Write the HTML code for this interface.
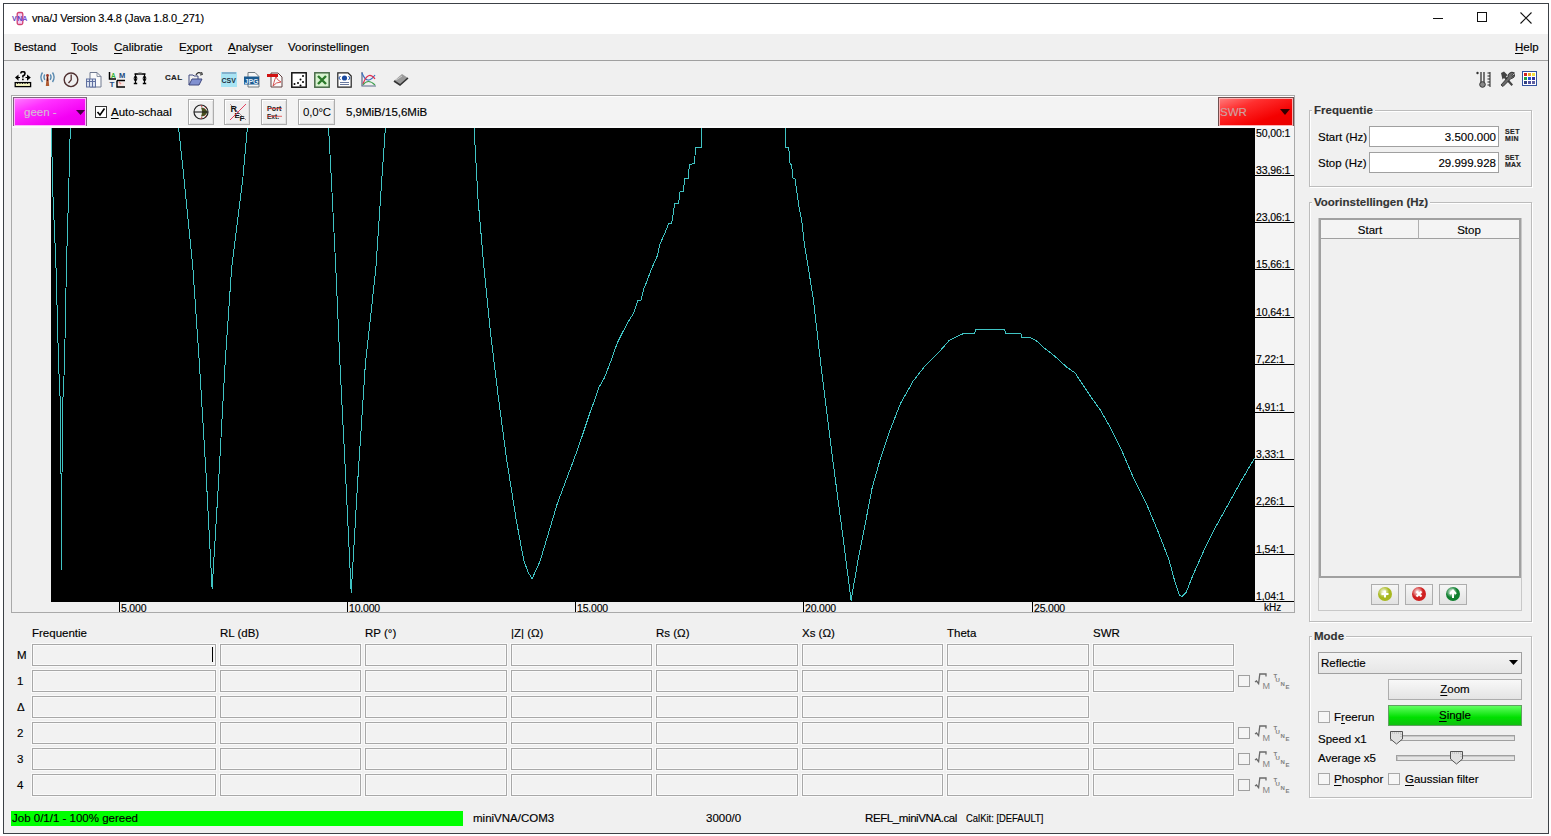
<!DOCTYPE html><html><head><meta charset="utf-8"><style>

*{box-sizing:border-box;margin:0;padding:0}
html,body{width:1551px;height:836px;overflow:hidden;background:#fff;font-family:"Liberation Sans", sans-serif;color:#000}
.ab{position:absolute}
.t{position:absolute;white-space:nowrap;font-size:11.5px;line-height:14px;color:#000;-webkit-text-stroke:0.15px currentColor}
.fld{position:absolute;border:1px solid #a8a8a8;background:#f2f2f2;box-shadow:inset 0 0 0 1px #fafafa,0 0 0 1px #fafafa}
.u{text-decoration:underline;text-decoration-thickness:1px;text-underline-offset:2px}

</style></head><body>
<div class="ab" style="left:3px;top:3px;width:1546px;height:831px;border:1px solid #3c4146;background:#f0f0f0"></div>
<div class="ab" style="left:4px;top:4px;width:1544px;height:30px;background:#fff"></div>
<div class="t" style="left:32px;top:11px;font-size:11px;letter-spacing:-0.2px;color:#000">vna/J Version 3.4.8 (Java 1.8.0_271)</div>
<div class="ab" style="left:1433px;top:18px;width:10px;height:1px;background:#111"></div>
<div class="ab" style="left:1477px;top:12px;width:10px;height:10px;border:1px solid #111"></div>
<svg class="ab" style="left:1520px;top:12px" width="12" height="12"><path d="M0.5 0.5L11.5 11.5M11.5 0.5L0.5 11.5" stroke="#111" stroke-width="1.1"/></svg>
<div class="ab" style="left:4px;top:34px;width:1544px;height:26px;background:#f0f0f0"></div>
<div class="ab" style="left:4px;top:60px;width:1544px;height:1px;background:#a0a0a0"></div>
<div class="t" style="left:14px;top:40px">Bestand</div>
<div class="t" style="left:71px;top:40px"><span class="u">T</span>ools</div>
<div class="t" style="left:114px;top:40px"><span class="u">C</span>alibratie</div>
<div class="t" style="left:179px;top:40px">E<span class="u">x</span>port</div>
<div class="t" style="left:228px;top:40px"><span class="u">A</span>nalyser</div>
<div class="t" style="left:288px;top:40px">Voorinstellingen</div>
<div class="t" style="left:1515px;top:40px"><span class="u">H</span>elp</div>
<div class="ab" style="left:11px;top:95px;width:1284px;height:518px;border:1px solid #a9a9a9;background:#f0f0f0"></div>
<div class="ab" style="left:12px;top:96px;width:1282px;height:32px;background:#f3f3f3;border-top:1px solid #fff"></div>
<div class="ab" style="left:13px;top:97px;width:74px;height:30px;border:1px solid #806080;box-shadow:inset 0 0 0 1px #fdb4fd;background:linear-gradient(160deg,#ff80ff 0%,#ff30ff 30%,#f400f4 70%,#e800e8 100%)"></div>
<div class="t" style="left:24px;top:105px;color:#d4bcd4">geen -</div>
<svg class="ab" style="left:76px;top:110px" width="9" height="5"><path d="M0 0H9L4.5 5Z" fill="#400040"/></svg>
<div class="ab" style="left:95px;top:106px;width:12px;height:12px;border:1px solid #333;background:#fff"></div>
<svg class="ab" style="left:96px;top:107px" width="10" height="10"><path d="M1.5 5L4 8L8.5 1.5" stroke="#000" stroke-width="1.6" fill="none"/></svg>
<div class="t" style="left:111px;top:105px"><span class="u">A</span>uto-schaal</div>
<div class="ab" style="left:188px;top:99px;width:26px;height:26px;border:1px solid #adadad;box-shadow:inset 1px 1px 0 #fff,inset -1px -1px 0 #e0e0e0;background:#f0f0f0"></div>
<div class="ab" style="left:224px;top:99px;width:26px;height:26px;border:1px solid #adadad;box-shadow:inset 1px 1px 0 #fff,inset -1px -1px 0 #e0e0e0;background:#f0f0f0"></div>
<div class="ab" style="left:261px;top:99px;width:26px;height:26px;border:1px solid #adadad;box-shadow:inset 1px 1px 0 #fff,inset -1px -1px 0 #e0e0e0;background:#f0f0f0"></div>
<div class="ab" style="left:298px;top:99px;width:37px;height:26px;border:1px solid #adadad;box-shadow:inset 1px 1px 0 #fff,inset -1px -1px 0 #e0e0e0;background:#f0f0f0"></div>
<div class="t" style="left:303px;top:105px;font-size:11.5px;letter-spacing:-0.2px;-webkit-text-stroke:0">0,0°C</div>
<div class="t" style="left:346px;top:105px">5,9MiB/15,6MiB</div>
<svg class="ab" style="left:192px;top:103px" width="18" height="18"><path d="M9 4.5Q13.5 4.5 15.5 9Q13.5 13.5 9 13.5Q11 9 9 4.5Z" fill="#4a5020"/><circle cx="9" cy="9" r="7" fill="none" stroke="#222" stroke-width="1.2"/><path d="M2 9H16" stroke="#222" stroke-width="1.1"/><path d="M9 2L10 4M9 16L10 14M14 4L12.5 5.5M14 14L12.5 12.5" stroke="#c03030" stroke-width="0.9"/></svg>
<svg class="ab" style="left:224px;top:98px" width="26" height="26"><path d="M6 6L22 22" stroke="#604040" stroke-width="0.5"/><text x="6.5" y="13.5" font-size="9" font-family="Liberation Sans" font-weight="bold" fill="#111">R</text><text x="10.5" y="19.5" font-size="8" font-family="Liberation Sans" font-weight="bold" fill="#111">E</text><text x="15.5" y="22.5" font-size="8" font-family="Liberation Sans" font-weight="bold" fill="#111">F</text><path d="M6 22L22 6" stroke="#e03050" stroke-width="0.9"/></svg>
<svg class="ab" style="left:261px;top:98px" width="26" height="26"><text x="6" y="13" font-size="7.5" font-family="Liberation Sans" font-weight="bold" fill="#222" textLength="14.5" lengthAdjust="spacingAndGlyphs">Port</text><text x="6" y="21" font-size="7.5" font-family="Liberation Sans" font-weight="bold" fill="#222" textLength="12" lengthAdjust="spacingAndGlyphs">Ext.</text><path d="M6 10.6H21M6 18.3H21" stroke="#e04040" stroke-width="0.8"/></svg>
<div class="ab" style="left:1218px;top:97px;width:76px;height:30px;border:1px solid #705050;box-shadow:inset 0 0 0 1px #fdb0b0;background:linear-gradient(160deg,#ff8080 0%,#ff3030 30%,#f40000 70%,#e80000 100%)"></div>
<div class="t" style="left:1220px;top:105px;color:#d0a0a0">SWR</div>
<svg class="ab" style="left:1280px;top:109px" width="10" height="6"><path d="M0 0H10L5 6Z" fill="#300000"/></svg>
<div class="ab" style="left:12px;top:126px;width:1282px;height:2px;background:#fafafa"></div>
<div class="ab" style="left:51px;top:128px;width:1204px;height:474px;background:#000"></div>
<div class="ab" style="left:1255px;top:128px;width:39px;height:474px;background:#f4f4f4"></div>
<div class="t" style="left:1256px;top:128px;font-size:10.5px;line-height:11px;letter-spacing:-0.1px">50,00:1</div>
<div class="ab" style="left:1255px;top:175px;width:39px;height:1px;background:#000"></div>
<div class="t" style="left:1256px;top:165px;font-size:10.5px;line-height:11px;letter-spacing:-0.1px">33,96:1</div>
<div class="ab" style="left:1255px;top:222px;width:39px;height:1px;background:#000"></div>
<div class="t" style="left:1256px;top:212px;font-size:10.5px;line-height:11px;letter-spacing:-0.1px">23,06:1</div>
<div class="ab" style="left:1255px;top:269px;width:39px;height:1px;background:#000"></div>
<div class="t" style="left:1256px;top:259px;font-size:10.5px;line-height:11px;letter-spacing:-0.1px">15,66:1</div>
<div class="ab" style="left:1255px;top:317px;width:39px;height:1px;background:#000"></div>
<div class="t" style="left:1256px;top:307px;font-size:10.5px;line-height:11px;letter-spacing:-0.1px">10,64:1</div>
<div class="ab" style="left:1255px;top:364px;width:39px;height:1px;background:#000"></div>
<div class="t" style="left:1256px;top:354px;font-size:10.5px;line-height:11px;letter-spacing:-0.1px">7,22:1</div>
<div class="ab" style="left:1255px;top:412px;width:39px;height:1px;background:#000"></div>
<div class="t" style="left:1256px;top:402px;font-size:10.5px;line-height:11px;letter-spacing:-0.1px">4,91:1</div>
<div class="ab" style="left:1255px;top:459px;width:39px;height:1px;background:#000"></div>
<div class="t" style="left:1256px;top:449px;font-size:10.5px;line-height:11px;letter-spacing:-0.1px">3,33:1</div>
<div class="ab" style="left:1255px;top:506px;width:39px;height:1px;background:#000"></div>
<div class="t" style="left:1256px;top:496px;font-size:10.5px;line-height:11px;letter-spacing:-0.1px">2,26:1</div>
<div class="ab" style="left:1255px;top:554px;width:39px;height:1px;background:#000"></div>
<div class="t" style="left:1256px;top:544px;font-size:10.5px;line-height:11px;letter-spacing:-0.1px">1,54:1</div>
<div class="ab" style="left:1255px;top:601px;width:39px;height:1px;background:#000"></div>
<div class="t" style="left:1256px;top:591px;font-size:10.5px;line-height:11px;letter-spacing:-0.1px">1,04:1</div>
<div class="ab" style="left:119px;top:602px;width:1px;height:10px;background:#000"></div>
<div class="t" style="left:121px;top:603px;font-size:10.5px;line-height:11px;letter-spacing:-0.2px">5.000</div>
<div class="ab" style="left:347px;top:602px;width:1px;height:10px;background:#000"></div>
<div class="t" style="left:349px;top:603px;font-size:10.5px;line-height:11px;letter-spacing:-0.2px">10.000</div>
<div class="ab" style="left:575px;top:602px;width:1px;height:10px;background:#000"></div>
<div class="t" style="left:577px;top:603px;font-size:10.5px;line-height:11px;letter-spacing:-0.2px">15.000</div>
<div class="ab" style="left:803px;top:602px;width:1px;height:10px;background:#000"></div>
<div class="t" style="left:805px;top:603px;font-size:10.5px;line-height:11px;letter-spacing:-0.2px">20.000</div>
<div class="ab" style="left:1032px;top:602px;width:1px;height:10px;background:#000"></div>
<div class="t" style="left:1034px;top:603px;font-size:10.5px;line-height:11px;letter-spacing:-0.2px">25.000</div>
<div class="t" style="left:1264px;top:602px;font-size:10px;line-height:11px">kHz</div>
<svg class="ab" style="left:0;top:0" width="1551" height="836"><defs><clipPath id="cc"><rect x="51" y="128" width="1204" height="474"/></clipPath></defs><g clip-path="url(#cc)" fill="none" stroke="#40c4c4" stroke-width="1" stroke-linejoin="round" shape-rendering="crispEdges"><polyline points="51.3,128.0 53.0,197.0 55.9,263.0 58.6,365.0 60.3,402.0 61.0,474.0 61.4,570.0 62.0,474.0 62.8,402.0 64.5,365.0 66.5,263.0 68.5,197.0 70.3,128.0"/><polyline points="178.6,128.0 183.8,176.6 192.9,268.3 199.5,365.0 206.4,479.6 212.1,588.6 218.7,479.6 225.0,365.0 231.6,268.3 243.0,176.6 247.4,128.0"/><polyline points="328.6,128.0 331.5,182.3 335.8,268.0 340.0,365.0 345.8,479.7 351.2,593.0 357.8,479.7 365.3,365.0 375.9,268.0 381.6,182.3 385.4,128.0"/><polyline points="474.1,128.0 478.1,200.0 483.7,264.6 490.1,329.2 497.9,393.8 506.5,458.4 516.0,518.7 523.7,560.0 528.0,572.0 532.1,578.8 540.1,561.0 548.7,532.3 557.3,503.6 565.9,480.6 574.6,457.6 581.7,437.5 590.3,411.7 594.6,400.2 599.0,387.3 604.7,377.2 611.3,360.0 617.2,343.2 627.3,323.1 633.7,313.0 638.0,300.1 640.9,300.8 643.8,288.7 646.7,282.0 651.0,270.0 653.4,264.7 657.2,256.1 660.1,243.7 664.9,233.1 668.7,223.6 671.6,223.6 674.8,203.5 678.7,203.0 679.8,192.0 683.6,191.5 684.4,178.6 688.2,178.6 689.4,164.2 694.5,163.8 695.5,147.6 701.2,147.2 701.2,127.0 785.8,127.0 785.8,147.3 788.7,147.7 790.1,163.8 791.5,164.5 793.0,178.1 795.1,178.8 798.7,205.4 801.6,219.7 804.5,245.0 813.1,297.3 820.9,365.0 831.6,451.0 843.0,537.3 851.1,600.4 857.7,561.9 864.0,530.2 871.9,489.0 879.9,460.4 889.4,431.9 900.5,403.4 913.1,381.2 924.2,366.9 936.9,354.3 943.1,347.4 948.8,340.9 954.6,337.6 962.5,334.0 974.7,333.7 975.4,329.9 1004.8,329.9 1005.5,333.7 1021.3,334.0 1022.0,337.6 1030.7,338.0 1037.8,341.6 1043.6,347.5 1050.8,353.0 1057.9,359.0 1066.5,367.0 1075.2,373.0 1080.9,382.0 1091.0,397.0 1100.3,410.0 1110.6,428.0 1121.6,450.1 1134.5,480.3 1147.4,506.1 1158.2,531.9 1169.0,559.9 1175.4,583.6 1179.5,595.0 1182.0,596.6 1186.2,592.3 1192.9,575.2 1203.2,552.0 1216.0,526.3 1228.9,503.2 1241.7,480.0 1254.6,458.2"/></g></svg>
<div class="t" style="left:32px;top:626px">Frequentie</div>
<div class="t" style="left:220px;top:626px">RL (dB)</div>
<div class="t" style="left:365px;top:626px">RP (°)</div>
<div class="t" style="left:511px;top:626px">|Z| (Ω)</div>
<div class="t" style="left:656px;top:626px">Rs (Ω)</div>
<div class="t" style="left:802px;top:626px">Xs (Ω)</div>
<div class="t" style="left:947px;top:626px">Theta</div>
<div class="t" style="left:1093px;top:626px">SWR</div>
<div class="t" style="left:17px;top:648px">M</div>
<div class="fld" style="left:32px;top:644px;width:184px;height:22px"></div>
<div class="fld" style="left:220px;top:644px;width:141px;height:22px"></div>
<div class="fld" style="left:365px;top:644px;width:142px;height:22px"></div>
<div class="fld" style="left:511px;top:644px;width:141px;height:22px"></div>
<div class="fld" style="left:656px;top:644px;width:142px;height:22px"></div>
<div class="fld" style="left:802px;top:644px;width:141px;height:22px"></div>
<div class="fld" style="left:947px;top:644px;width:142px;height:22px"></div>
<div class="fld" style="left:1093px;top:644px;width:141px;height:22px"></div>
<div class="t" style="left:17px;top:674px">1</div>
<div class="fld" style="left:32px;top:670px;width:184px;height:22px"></div>
<div class="fld" style="left:220px;top:670px;width:141px;height:22px"></div>
<div class="fld" style="left:365px;top:670px;width:142px;height:22px"></div>
<div class="fld" style="left:511px;top:670px;width:141px;height:22px"></div>
<div class="fld" style="left:656px;top:670px;width:142px;height:22px"></div>
<div class="fld" style="left:802px;top:670px;width:141px;height:22px"></div>
<div class="fld" style="left:947px;top:670px;width:142px;height:22px"></div>
<div class="fld" style="left:1093px;top:670px;width:141px;height:22px"></div>
<div class="ab" style="left:1238px;top:675px;width:12px;height:12px;border:1.5px solid #a0a0a0;background:#f4f4f4"></div>
<svg class="ab" style="left:1254px;top:672px" width="38" height="20"><path d="M1 10L2.5 9L4.6 11.7L5.8 2H12V4.5" stroke="#6a6a6a" stroke-width="1.3" fill="none"/><text x="8.5" y="16.5" font-size="9" font-family="Liberation Sans" fill="#858585">M</text><text x="19.5" y="5.5" font-size="6" font-weight="bold" font-family="Liberation Sans" fill="#808080">T</text><text x="21.5" y="9.5" font-size="6" font-weight="bold" font-family="Liberation Sans" fill="#808080">U</text><text x="26.5" y="14" font-size="6" font-weight="bold" font-family="Liberation Sans" fill="#808080">N</text><text x="31.5" y="17" font-size="6" font-weight="bold" font-family="Liberation Sans" fill="#808080">E</text></svg>
<div class="t" style="left:17px;top:700px">Δ</div>
<div class="fld" style="left:32px;top:696px;width:184px;height:22px"></div>
<div class="fld" style="left:220px;top:696px;width:141px;height:22px"></div>
<div class="fld" style="left:365px;top:696px;width:142px;height:22px"></div>
<div class="fld" style="left:511px;top:696px;width:141px;height:22px"></div>
<div class="fld" style="left:656px;top:696px;width:142px;height:22px"></div>
<div class="fld" style="left:802px;top:696px;width:141px;height:22px"></div>
<div class="fld" style="left:947px;top:696px;width:142px;height:22px"></div>
<div class="t" style="left:17px;top:726px">2</div>
<div class="fld" style="left:32px;top:722px;width:184px;height:22px"></div>
<div class="fld" style="left:220px;top:722px;width:141px;height:22px"></div>
<div class="fld" style="left:365px;top:722px;width:142px;height:22px"></div>
<div class="fld" style="left:511px;top:722px;width:141px;height:22px"></div>
<div class="fld" style="left:656px;top:722px;width:142px;height:22px"></div>
<div class="fld" style="left:802px;top:722px;width:141px;height:22px"></div>
<div class="fld" style="left:947px;top:722px;width:142px;height:22px"></div>
<div class="fld" style="left:1093px;top:722px;width:141px;height:22px"></div>
<div class="ab" style="left:1238px;top:727px;width:12px;height:12px;border:1.5px solid #a0a0a0;background:#f4f4f4"></div>
<svg class="ab" style="left:1254px;top:724px" width="38" height="20"><path d="M1 10L2.5 9L4.6 11.7L5.8 2H12V4.5" stroke="#6a6a6a" stroke-width="1.3" fill="none"/><text x="8.5" y="16.5" font-size="9" font-family="Liberation Sans" fill="#858585">M</text><text x="19.5" y="5.5" font-size="6" font-weight="bold" font-family="Liberation Sans" fill="#808080">T</text><text x="21.5" y="9.5" font-size="6" font-weight="bold" font-family="Liberation Sans" fill="#808080">U</text><text x="26.5" y="14" font-size="6" font-weight="bold" font-family="Liberation Sans" fill="#808080">N</text><text x="31.5" y="17" font-size="6" font-weight="bold" font-family="Liberation Sans" fill="#808080">E</text></svg>
<div class="t" style="left:17px;top:752px">3</div>
<div class="fld" style="left:32px;top:748px;width:184px;height:22px"></div>
<div class="fld" style="left:220px;top:748px;width:141px;height:22px"></div>
<div class="fld" style="left:365px;top:748px;width:142px;height:22px"></div>
<div class="fld" style="left:511px;top:748px;width:141px;height:22px"></div>
<div class="fld" style="left:656px;top:748px;width:142px;height:22px"></div>
<div class="fld" style="left:802px;top:748px;width:141px;height:22px"></div>
<div class="fld" style="left:947px;top:748px;width:142px;height:22px"></div>
<div class="fld" style="left:1093px;top:748px;width:141px;height:22px"></div>
<div class="ab" style="left:1238px;top:753px;width:12px;height:12px;border:1.5px solid #a0a0a0;background:#f4f4f4"></div>
<svg class="ab" style="left:1254px;top:750px" width="38" height="20"><path d="M1 10L2.5 9L4.6 11.7L5.8 2H12V4.5" stroke="#6a6a6a" stroke-width="1.3" fill="none"/><text x="8.5" y="16.5" font-size="9" font-family="Liberation Sans" fill="#858585">M</text><text x="19.5" y="5.5" font-size="6" font-weight="bold" font-family="Liberation Sans" fill="#808080">T</text><text x="21.5" y="9.5" font-size="6" font-weight="bold" font-family="Liberation Sans" fill="#808080">U</text><text x="26.5" y="14" font-size="6" font-weight="bold" font-family="Liberation Sans" fill="#808080">N</text><text x="31.5" y="17" font-size="6" font-weight="bold" font-family="Liberation Sans" fill="#808080">E</text></svg>
<div class="t" style="left:17px;top:778px">4</div>
<div class="fld" style="left:32px;top:774px;width:184px;height:22px"></div>
<div class="fld" style="left:220px;top:774px;width:141px;height:22px"></div>
<div class="fld" style="left:365px;top:774px;width:142px;height:22px"></div>
<div class="fld" style="left:511px;top:774px;width:141px;height:22px"></div>
<div class="fld" style="left:656px;top:774px;width:142px;height:22px"></div>
<div class="fld" style="left:802px;top:774px;width:141px;height:22px"></div>
<div class="fld" style="left:947px;top:774px;width:142px;height:22px"></div>
<div class="fld" style="left:1093px;top:774px;width:141px;height:22px"></div>
<div class="ab" style="left:1238px;top:779px;width:12px;height:12px;border:1.5px solid #a0a0a0;background:#f4f4f4"></div>
<svg class="ab" style="left:1254px;top:776px" width="38" height="20"><path d="M1 10L2.5 9L4.6 11.7L5.8 2H12V4.5" stroke="#6a6a6a" stroke-width="1.3" fill="none"/><text x="8.5" y="16.5" font-size="9" font-family="Liberation Sans" fill="#858585">M</text><text x="19.5" y="5.5" font-size="6" font-weight="bold" font-family="Liberation Sans" fill="#808080">T</text><text x="21.5" y="9.5" font-size="6" font-weight="bold" font-family="Liberation Sans" fill="#808080">U</text><text x="26.5" y="14" font-size="6" font-weight="bold" font-family="Liberation Sans" fill="#808080">N</text><text x="31.5" y="17" font-size="6" font-weight="bold" font-family="Liberation Sans" fill="#808080">E</text></svg>
<div class="ab" style="left:212px;top:647px;width:1px;height:15px;background:#000"></div>
<div class="ab" style="left:11px;top:811px;width:452px;height:15px;background:#00ff00"></div>
<div class="t" style="left:12px;top:811px">Job 0/1/1 - 100% gereed</div>
<div class="t" style="left:473px;top:811px">miniVNA/COM3</div>
<div class="t" style="left:706px;top:811px">3000/0</div>
<div class="t" style="left:865px;top:811px;letter-spacing:-0.4px">REFL_miniVNA.cal</div>
<div class="t" style="left:966px;top:811px;transform:scaleX(0.82);transform-origin:0 0">CalKit: [DEFAULT]</div>
<div class="ab" style="left:1309px;top:110px;width:223px;height:77px;border:1px solid #bcbcbc;box-shadow:inset 1px 1px 0 #fff, 1px 1px 0 #fff"></div>
<div class="t" style="left:1312px;top:103px;padding:0 2px;background:#f0f0f0;font-weight:bold;color:#333">Frequentie</div>
<div class="t" style="left:1318px;top:130px">Start (Hz)</div>
<div class="t" style="left:1318px;top:156px">Stop (Hz)</div>
<div class="ab" style="left:1369px;top:126px;width:130px;height:21px;border:1px solid #a0a0a0;background:#fff"></div>
<div class="ab" style="left:1369px;top:152px;width:130px;height:21px;border:1px solid #a0a0a0;background:#fff"></div>
<div class="t" style="left:1369px;top:130px;width:127px;text-align:right">3.500.000</div>
<div class="t" style="left:1369px;top:156px;width:127px;text-align:right">29.999.928</div>
<div class="t" style="left:1505px;top:128px;font-size:7px;line-height:7px;font-weight:bold;color:#222;letter-spacing:0.4px">SET<br>MIN</div>
<div class="t" style="left:1505px;top:154px;font-size:7px;line-height:7px;font-weight:bold;color:#222;letter-spacing:0.2px">SET<br>MAX</div>
<div class="ab" style="left:1309px;top:202px;width:223px;height:420px;border:1px solid #bcbcbc;box-shadow:inset 1px 1px 0 #fff, 1px 1px 0 #fff"></div>
<div class="t" style="left:1312px;top:195px;padding:0 2px;background:#f0f0f0;font-weight:bold;color:#333">Voorinstellingen (Hz)</div>
<div class="ab" style="left:1318px;top:218px;width:204px;height:393px;border:1px solid #c8c8c8"></div>
<div class="ab" style="left:1319px;top:218px;width:202px;height:360px;border:2px solid #a0a0a0;border-top-width:2px;background:#f0f0f0"></div>
<div class="ab" style="left:1321px;top:220px;width:98px;height:19px;border-right:1px solid #b0b0b0;border-bottom:1px solid #a0a0a0;background:#f4f4f4"></div>
<div class="ab" style="left:1419px;top:220px;width:100px;height:19px;border-bottom:1px solid #a0a0a0;background:#f4f4f4"></div>
<div class="t" style="left:1321px;top:223px;width:98px;text-align:center">Start</div>
<div class="t" style="left:1419px;top:223px;width:100px;text-align:center">Stop</div>
<div class="ab" style="left:1371px;top:584px;width:28px;height:21px;border:1px solid #adadad;background:linear-gradient(#f6f6f6,#e2e2e2)"></div>
<div class="ab" style="left:1378px;top:587px;width:14px;height:14px;border-radius:50%;background:radial-gradient(circle at 40% 35%,#fff 0,#a8b820 45%,#a8b820 100%)"></div>
<div class="ab" style="left:1405px;top:584px;width:28px;height:21px;border:1px solid #adadad;background:linear-gradient(#f6f6f6,#e2e2e2)"></div>
<div class="ab" style="left:1412px;top:587px;width:14px;height:14px;border-radius:50%;background:radial-gradient(circle at 40% 35%,#fff 0,#d02020 45%,#d02020 100%)"></div>
<div class="ab" style="left:1439px;top:584px;width:28px;height:21px;border:1px solid #adadad;background:linear-gradient(#f6f6f6,#e2e2e2)"></div>
<div class="ab" style="left:1446px;top:587px;width:14px;height:14px;border-radius:50%;background:radial-gradient(circle at 40% 35%,#fff 0,#108030 45%,#108030 100%)"></div>
<svg class="ab" style="left:1378px;top:587px" width="14" height="14"><path d="M7 3.5V10.5M3.5 7H10.5" stroke="#fff" stroke-width="2"/></svg>
<svg class="ab" style="left:1412px;top:587px" width="14" height="14"><path d="M4.5 4.5L9.5 9.5M9.5 4.5L4.5 9.5" stroke="#fff" stroke-width="2"/></svg>
<svg class="ab" style="left:1446px;top:587px" width="14" height="14"><path d="M7 11V4M4 7L7 3.5L10 7" stroke="#fff" stroke-width="2" fill="none"/></svg>
<div class="ab" style="left:1309px;top:636px;width:223px;height:162px;border:1px solid #bcbcbc;box-shadow:inset 1px 1px 0 #fff, 1px 1px 0 #fff"></div>
<div class="t" style="left:1312px;top:629px;padding:0 2px;background:#f0f0f0;font-weight:bold;color:#333">Mode</div>
<div class="ab" style="left:1318px;top:652px;width:204px;height:22px;border:1px solid #a0a0a0;background:linear-gradient(#f4f4f4,#e6e6e6)"></div>
<div class="t" style="left:1321px;top:656px">Reflectie</div>
<svg class="ab" style="left:1509px;top:660px" width="9" height="5"><path d="M0 0H9L4.5 5Z" fill="#000"/></svg>
<div class="ab" style="left:1388px;top:679px;width:134px;height:21px;border:1px solid #adadad;background:linear-gradient(#f8f8f8,#e4e4e4)"></div>
<div class="t" style="left:1388px;top:682px;width:134px;text-align:center"><span class="u">Z</span>oom</div>
<div class="ab" style="left:1388px;top:705px;width:134px;height:21px;border:1px solid #60a060;background:linear-gradient(#60ff60,#00e000 60%,#10c010)"></div>
<div class="t" style="left:1388px;top:708px;width:134px;text-align:center"><span class="u">S</span>ingle</div>
<div class="ab" style="left:1318px;top:711px;width:12px;height:12px;border:1px solid #a8a8a8;background:#f6f6f6"></div>
<div class="t" style="left:1334px;top:710px">F<span class="u">r</span>eerun</div>
<div class="t" style="left:1318px;top:732px">Speed x1</div>
<div class="t" style="left:1318px;top:751px">Average x5</div>
<div class="ab" style="left:1390px;top:735px;width:125px;height:6px;border:1px solid #a0a0a0;background:#e6e6e6;box-shadow:inset 1px 1px 0 #c8c8c8"></div>
<div class="ab" style="left:1396px;top:755px;width:119px;height:6px;border:1px solid #a0a0a0;background:#e6e6e6;box-shadow:inset 1px 1px 0 #c8c8c8"></div>
<svg class="ab" style="left:1389px;top:730px" width="15" height="15"><path d="M1.5 1.5H13.5V9L7.5 14L1.5 9Z" fill="#e0e0e0" stroke="#555"/><path d="M3 3H12V8" stroke="#b0b0b0" stroke-dasharray="1 1" fill="none"/></svg>
<svg class="ab" style="left:1449px;top:750px" width="15" height="15"><path d="M1.5 1.5H13.5V9L7.5 14L1.5 9Z" fill="#e0e0e0" stroke="#555"/><path d="M3 3H12V8" stroke="#b0b0b0" stroke-dasharray="1 1" fill="none"/></svg>
<div class="ab" style="left:1318px;top:773px;width:12px;height:12px;border:1px solid #a8a8a8;background:#f6f6f6"></div>
<div class="t" style="left:1334px;top:772px"><span class="u">P</span>hosphor</div>
<div class="ab" style="left:1388px;top:773px;width:12px;height:12px;border:1px solid #a8a8a8;background:#f6f6f6"></div>
<div class="t" style="left:1405px;top:772px"><span class="u">G</span>aussian filter</div>
<svg class="ab" style="left:11px;top:11px" width="17" height="15" viewBox="0 0 17 15"><rect x="6.2" y="1.5" width="5.6" height="12" rx="1.5" fill="#f4d0f4" stroke="#d04070" stroke-width="1.3"/><text x="1" y="10.2" font-size="7" font-family="Liberation Sans" font-weight="bold" fill="#6040b8">V</text><text x="6.3" y="10.2" font-size="7" font-family="Liberation Sans" font-weight="bold" fill="#6040b8">N</text><text x="11.3" y="10.2" font-size="7" font-family="Liberation Sans" font-weight="bold" fill="#7a50d0">A</text></svg>
<svg class="ab" style="left:14px;top:71px" width="18" height="17" viewBox="0 0 18 17"><path d="M4.5 3.5L1 6.5L4.5 9.8Z" fill="#000"/><path d="M13 3.5L16.8 6.5L13 9.8Z" fill="#000"/><path d="M4 6.5H6M11.5 6.5H13.5" stroke="#000" stroke-width="1.2"/><path d="M6.8 2.6Q6.8 0.6 8.9 0.6Q11 0.6 11 2.4Q11 4 8.9 5V6.6" stroke="#000" stroke-width="1.6" fill="none"/><circle cx="8.9" cy="8.4" r="0.9" fill="#000"/><rect x="1.2" y="11.6" width="15.4" height="4" fill="#f8f8c4" stroke="#000" stroke-width="1.3"/><path d="M3 12.5H4M5.5 12.5H6.5M8 12.5H9M10.5 12.5H11.5M13 12.5H14" stroke="#222" stroke-width="1"/></svg>
<svg class="ab" style="left:39px;top:71px" width="17" height="16" viewBox="0 0 17 16"><path d="M3.5 1.5Q0.3 6 3.5 11M13.5 1.5Q16.7 6 13.5 11" stroke="#5a8ab0" stroke-width="1.4" fill="none"/><path d="M5.8 3.5Q4 6 5.8 9M11.2 3.5Q13 6 11.2 9" stroke="#5a8ab0" stroke-width="1.3" fill="none"/><circle cx="8.5" cy="4.5" r="1.4" fill="#a03828"/><path d="M7.8 5L6.8 15H10.2L9.2 5Z" fill="#b05a30"/><path d="M8 5.5L7.8 10H9.2L9 5.5Z" fill="#601810"/></svg>
<svg class="ab" style="left:63px;top:72px" width="16" height="16" viewBox="0 0 16 16"><circle cx="8" cy="7.8" r="6.8" fill="none" stroke="#503030" stroke-width="1.4"/><path d="M8.2 2.5V7.8L5.5 11" stroke="#503030" stroke-width="1.3" fill="none"/></svg>
<svg class="ab" style="left:86px;top:72px" width="16" height="16" viewBox="0 0 16 16"><path d="M4 0.5H11L15 4.5V15H4Z" fill="#fafafa" stroke="#707a90" stroke-width="1"/><path d="M11 0.5V4.5H15" fill="none" stroke="#707a90" stroke-width="0.8"/><rect x="0.5" y="7" width="9" height="8" fill="#dde4f0" stroke="#6070a0" stroke-width="1"/><path d="M0.5 9.5H9.5M3.5 7V15M6.5 7V15" stroke="#6070a0" stroke-width="1"/></svg>
<svg class="ab" style="left:108px;top:71px" width="18" height="17" viewBox="0 0 18 17"><path d="M1.5 1V8H8" stroke="#000" stroke-width="1.5" fill="none"/><text x="3" y="6.5" font-size="6.5" font-family="Liberation Sans" font-weight="bold" fill="#30b030">A</text><text x="11" y="7" font-size="7.5" font-family="Liberation Sans" font-weight="bold" fill="#204a80">M</text><text x="1.5" y="16" font-size="8" font-family="Liberation Sans" font-weight="bold" fill="#204a80">T</text><path d="M9 9.5V16H17M9 9.5H17" stroke="#000" stroke-width="1.4" fill="none"/><path d="M11 11L13 13" stroke="#d02020" stroke-width="1.5"/><rect x="10" y="11" width="6" height="4" fill="#fde0d8" opacity="0.6"/></svg>
<svg class="ab" style="left:133px;top:72px" width="14" height="13" viewBox="0 0 14 13"><path d="M1.5 2H12.5" stroke="#333" stroke-width="2"/><ellipse cx="7" cy="1.8" rx="2.5" ry="1.2" fill="#555"/><path d="M2.5 2V11M11.5 2V11" stroke="#000" stroke-width="1.2"/><ellipse cx="2.5" cy="6.5" rx="1.3" ry="2.5" fill="none" stroke="#000" stroke-width="1"/><ellipse cx="11.5" cy="6.5" rx="1.3" ry="2.5" fill="none" stroke="#000" stroke-width="1"/><path d="M0.8 11.5H4.2M9.8 11.5H13.2" stroke="#000" stroke-width="1.4"/></svg>
<div class="t" style="left:165px;top:73px;font-size:8px;line-height:9px;font-weight:bold;color:#222;letter-spacing:0.3px">CAL</div>
<svg class="ab" style="left:187px;top:71px" width="17" height="16" viewBox="0 0 17 16"><path d="M2 6V14H12L15 8H5L2 14" fill="#8090d0" stroke="#404a80" stroke-width="1"/><path d="M2 6V4H6L7 5H11V8" fill="none" stroke="#404a80" stroke-width="1"/><path d="M9 4Q11 0 14.5 2.5" stroke="#303030" stroke-width="1.2" fill="none"/><path d="M13 4L15.5 3.5L14.5 1" stroke="#303030" stroke-width="1" fill="none"/></svg>
<svg class="ab" style="left:221px;top:72px" width="16" height="15" viewBox="0 0 16 15"><rect x="0" y="0" width="16" height="15" fill="#a8e4f4"/><path d="M1 1H15" stroke="#7aa0c0" stroke-width="1.5"/><text x="0.5" y="10.5" font-size="7" font-family="Liberation Sans" font-weight="bold" fill="#203040">CSV</text></svg>
<svg class="ab" style="left:244px;top:72px" width="16" height="16" viewBox="0 0 16 16"><path d="M4 0.5H11L15 4.5V15H4Z" fill="#f6f6f6" stroke="#707a80" stroke-width="1"/><rect x="0" y="4.5" width="15" height="8" fill="#1a5a90"/><text x="0.5" y="11.5" font-size="7.5" font-family="Liberation Sans" font-weight="bold" fill="#e0ecf8" textLength="14" lengthAdjust="spacingAndGlyphs">JPG</text></svg>
<svg class="ab" style="left:267px;top:72px" width="17" height="16" viewBox="0 0 17 16"><path d="M4 1H11L15 5V15H4Z" fill="#fafafa" stroke="#604040" stroke-width="1"/><rect x="0" y="2" width="11" height="3" fill="#d01010"/><path d="M6 14Q8 6 9 5Q10 8 14 10Q9 10 6 14" fill="none" stroke="#d04040" stroke-width="0.9"/></svg>
<svg class="ab" style="left:291px;top:72px" width="16" height="16" viewBox="0 0 16 16"><rect x="0.8" y="0.8" width="14.4" height="14.4" fill="#fff" stroke="#111" stroke-width="1.5"/><circle cx="12" cy="4" r="1" fill="#000"/><circle cx="9.5" cy="7.5" r="1" fill="#000"/><circle cx="12" cy="10" r="1" fill="#000"/><circle cx="7" cy="11" r="1" fill="#000"/><circle cx="3.5" cy="12" r="1" fill="#000"/><circle cx="9.5" cy="13.5" r="1" fill="#000"/></svg>
<svg class="ab" style="left:314px;top:72px" width="16" height="16" viewBox="0 0 16 16"><rect x="0.8" y="0.8" width="14.4" height="14.4" fill="#d8f4d0" stroke="#486a48" stroke-width="1.5"/><path d="M4 4L12 12M12 4L4 12" stroke="#2a7a2a" stroke-width="2.4"/></svg>
<svg class="ab" style="left:337px;top:72px" width="15" height="16" viewBox="0 0 15 16"><path d="M0.8 0.8H11L14.2 4V15.2H0.8Z" fill="#fff" stroke="#222" stroke-width="1.2"/><circle cx="7.5" cy="6" r="2.6" fill="#1a4aa0"/><path d="M3.5 4L1.8 6L3.5 8M11.5 4L13 6L11.5 8" stroke="#1a4aa0" stroke-width="1" fill="none"/><path d="M3 10.5H12M3 12.5H12" stroke="#6a7aa0" stroke-width="1"/></svg>
<svg class="ab" style="left:361px;top:72px" width="15" height="15" viewBox="0 0 15 15"><path d="M1 0V14H15" stroke="#5a6a8a" stroke-width="1.2" fill="none"/><path d="M1 1Q6 14 14 3" stroke="#3a70c0" stroke-width="1.2" fill="none"/><path d="M2 12Q7 -2 14 7" stroke="#e03050" stroke-width="1.2" fill="none"/><path d="M2 13Q7 6 14 13" stroke="#40a050" stroke-width="1.2" fill="none"/></svg>
<svg class="ab" style="left:393px;top:73px" width="16" height="14" viewBox="0 0 16 14"><path d="M1 8L9 1L15 5L7 12Z" fill="#9a9a9a"/><path d="M1 8L7 12L15 5" fill="none" stroke="#333" stroke-width="1.6"/><path d="M3 7L9 3" stroke="#d0d0d0" stroke-width="1"/></svg>
<svg class="ab" style="left:1476px;top:71px" width="16" height="17" viewBox="0 0 16 17"><circle cx="1.5" cy="2" r="1.2" fill="#333"/><path d="M5 1V11.5" stroke="#333" stroke-width="1.3"/><path d="M8 1V11.5" stroke="#333" stroke-width="1.3"/><circle cx="6.5" cy="13.5" r="2.8" fill="#888" stroke="#333" stroke-width="1"/><path d="M14 1V16M11.5 2H14M11.5 5H14M11.5 8H14M11.5 11H14M11.5 14H14" stroke="#222" stroke-width="1"/></svg>
<svg class="ab" style="left:1499px;top:71px" width="16" height="16" viewBox="0 0 16 16"><path d="M2 2L5 0.5L8.5 4L7 5.5L14 13.5L12.5 15L5 7L3.5 8.5Z" fill="#444"/><path d="M10 2.5Q13 0 15.5 2L13 4L13.5 5.5L15.5 3.5Q16 7 12 7.5L4 15.5L2 14L9 6Q8.5 4 10 2.5Z" fill="#6a6a6a" stroke="#222" stroke-width="0.8"/></svg>
<svg class="ab" style="left:1522px;top:71px" width="15" height="15" viewBox="0 0 15 15"><rect x="0.5" y="0.5" width="14" height="14" fill="#fff" stroke="#3050a0" stroke-width="1"/><rect x="2" y="2" width="3" height="3" fill="#d02020"/><rect x="6" y="2" width="3" height="3" fill="#f0a020"/><rect x="10" y="2" width="3" height="3" fill="#f0e040"/><rect x="2" y="6" width="3" height="3" fill="#20a040"/><rect x="6" y="6" width="3" height="3" fill="#2050d0"/><rect x="10" y="6" width="3" height="3" fill="#3030a0"/><rect x="2" y="10" width="3" height="3" fill="#304080"/><rect x="6" y="10" width="3" height="3" fill="#5050a0"/><rect x="10" y="10" width="3" height="3" fill="#6060a0"/></svg>
</body></html>
